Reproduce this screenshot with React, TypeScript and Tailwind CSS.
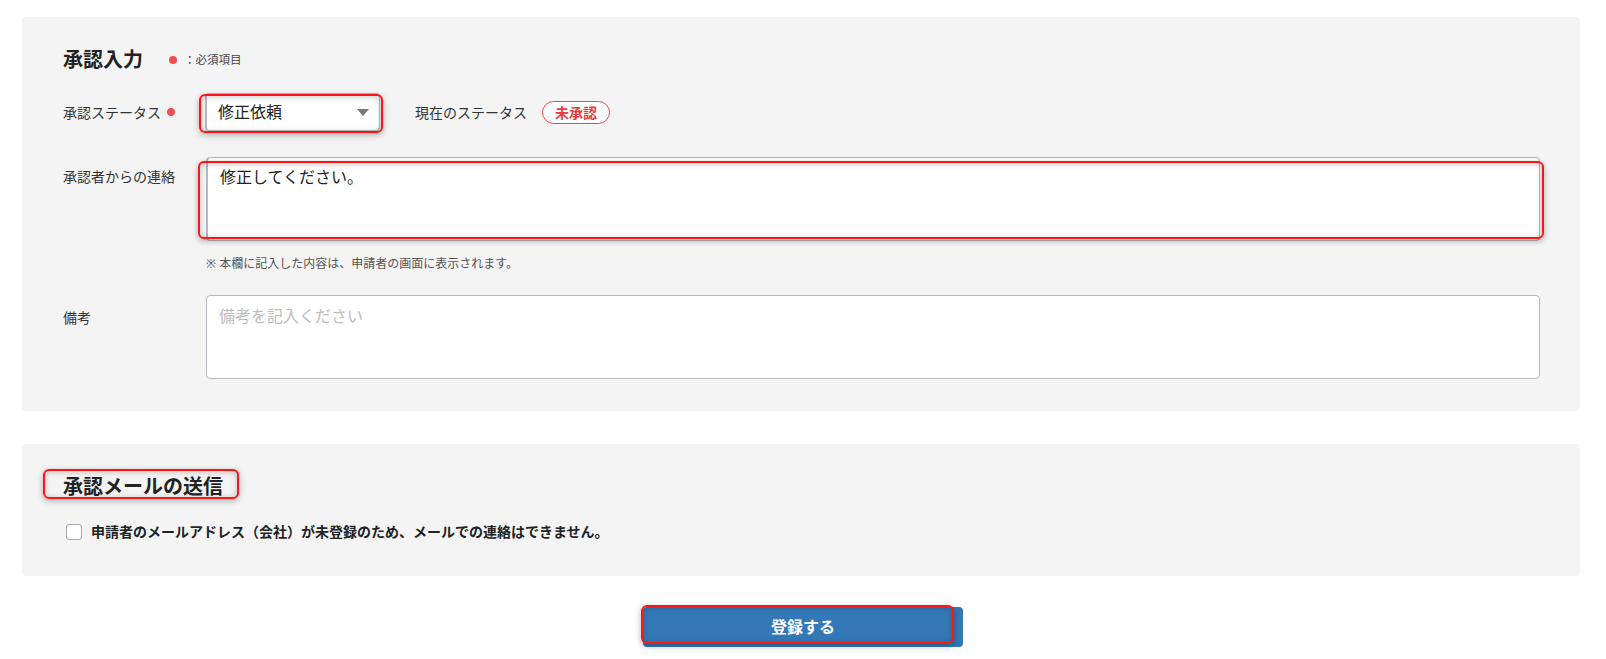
import React from "react";

const font = { fontFamily: '"Noto Sans", "Noto Sans CJK JP", sans-serif' };

function Mark({ className }: { className: string }) {
  return (
    <span
      className={
        "pointer-events-none absolute rounded-[6px] border-2 border-[#ff1414] shadow-[0_2px_6px_rgba(0,0,0,0.3),inset_0_1px_6px_rgba(0,0,0,0.22)] " +
        className
      }
    />
  );
}

function RedDot({ className = "" }: { className?: string }) {
  return <span className={"inline-block h-[8px] w-[8px] rounded-full bg-[#f05050] " + className} />;
}

export default function App() {
  return (
    <div style={font} className="min-h-[659px] w-full bg-white pt-[17px] text-[#333]">
      <section className="ml-[22px] mr-[26px] rounded-[4px] bg-[#f4f4f4] pb-[32px] pl-[41px] pr-[40px] pt-[29px]">
        <div className="flex items-center">
          <h2 className="text-[20px] font-bold leading-[28px] text-[#222]">承認入力</h2>
          <RedDot className="ml-[26px]" />
          <span className="ml-[7px] text-[11.5px] text-[#444]">：必須項目</span>
        </div>

        <div className="mt-[19px] flex h-[38px] items-center">
          <div className="flex w-[142px] items-center text-[14px]">
            承認ステータス
            <RedDot className="ml-[6px]" />
          </div>
          <div className="relative">
            <div className="flex h-[38px] w-[175px] items-center justify-between rounded-[4px] border border-[#b4b8c0] border-l-2 bg-white pl-[11px] pr-[10px] text-[16px] text-[#222]">
              <span>修正依頼</span>
              <svg width="12" height="7" viewBox="0 0 12 7">
                <path d="M0 0h12L6 7z" fill="#777" />
              </svg>
            </div>
            <Mark className="-left-[6px] top-[1px] -right-[3px] -bottom-[2px]" />
          </div>
          <span className="ml-[35px] text-[14px]">現在のステータス</span>
          <span className="ml-[15px] flex h-[23px] w-[68px] items-center justify-center rounded-full border border-[#f04848] bg-white text-[14px] font-bold text-[#e83c3c]">
            未承認
          </span>
        </div>

        <div className="mt-[26px] flex">
          <div className="w-[143px] pt-[9px] text-[14px]">承認者からの連絡</div>
          <div className="flex-1">
            <div className="relative">
              <div className="h-[84px] rounded-[4px] border border-[#b4b8c0] border-l-2 bg-white px-[12px] py-[7px] text-[16px] leading-[24px] text-[#222]">
                修正してください。
              </div>
              <Mark className="-left-[8px] top-[4px] -right-[4px] bottom-[2px]" />
            </div>
            <p className="mt-[15px] text-[12px] leading-[16px] text-[#555]">※ 本欄に記入した内容は、申請者の画面に表示されます。</p>
          </div>
        </div>

        <div className="mt-[23px] flex">
          <div className="w-[143px] pt-[12px] text-[14px]">備考</div>
          <div className="h-[84px] flex-1 rounded-[4px] border border-[#b4b8c0] bg-white px-[12px] py-[8px] text-[16px] leading-[24px] text-[#bdbdbd]">
            備考を記入ください
          </div>
        </div>
      </section>

      <section className="ml-[22px] mr-[26px] mt-[33px] rounded-[4px] bg-[#f4f4f4] pb-[34px] pl-[41px] pr-[40px] pt-[29px]">
        <div className="relative inline-block">
          <h2 className="text-[20px] font-bold leading-[28px] text-[#222]">承認メールの送信</h2>
          <Mark className="-left-[20px] -top-[4px] -right-[16px] bottom-[2px]" />
        </div>
        <label className="mt-[21px] flex items-center text-[14px] font-bold leading-[20px] text-[#222]">
          <span className="ml-[3px] h-[16px] w-[16px] rounded-[3px] border border-[#a8acb4] bg-white" />
          <span className="ml-[9px]">申請者のメールアドレス（会社）が未登録のため、メールでの連絡はできません。</span>
        </label>
      </section>

      <div className="mt-[31px] flex justify-center">
        <div className="relative">
          <button className="h-[40px] w-[320px] rounded-[4px] bg-[#3379b7] text-[16px] font-bold text-white">登録する</button>
          <Mark className="-left-[2px] -top-[2px] right-[9px] bottom-[3px]" />
        </div>
      </div>
    </div>
  );
}
